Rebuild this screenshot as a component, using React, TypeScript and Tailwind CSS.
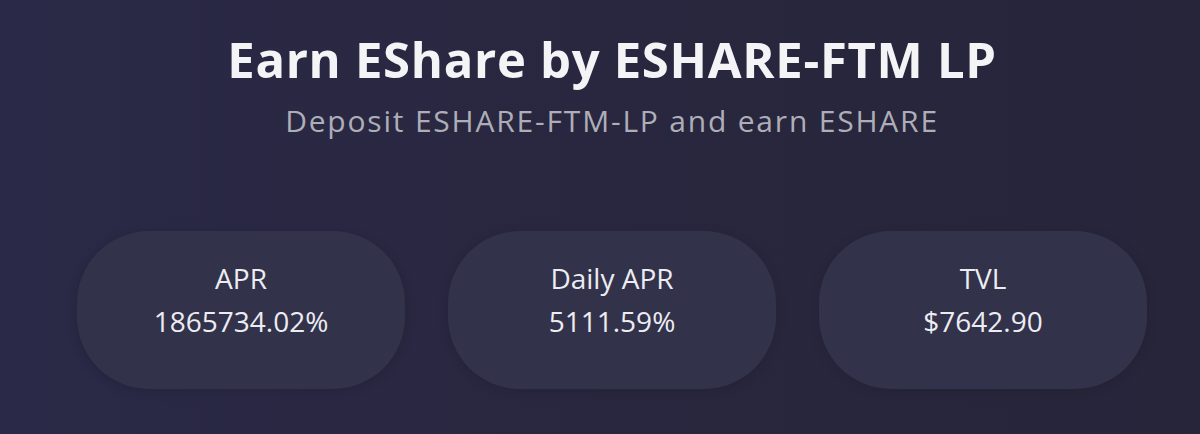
const stats = [
  { label: 'APR', value: '1865734.02%' },
  { label: 'Daily APR', value: '5111.59%' },
  { label: 'TVL', value: '$7642.90' },
];

const StatCard = ({ label, value }: { label: string; value: string }) => (
  <div className="flex h-[158px] w-[328px] flex-col items-center rounded-[72px] bg-[#32324a] pt-[30px] shadow-[0_2px_12px_rgba(0,0,0,0.12)]">
    <p className="text-[28px] leading-[34px] text-[#ececf2]">{label}</p>
    <p className="mt-[9px] text-[28px] leading-[34px] text-[#ececf2]">{value}</p>
  </div>
);

export default function App() {
  return (
    <div
      className="flex h-[434px] w-[1200px] flex-col items-center bg-gradient-to-r from-[#2a2947] via-[#29273f] to-[#27253a] pl-[24px] pt-[29px]"
      style={{ fontFamily: '"Open Sans", "Liberation Sans", sans-serif' }}
    >
      <h1 className="text-[49px] font-bold leading-[60px] tracking-[0.7px] text-[#f4f4f6]">
        Earn EShare by ESHARE-FTM LP
      </h1>
      <p className="mt-[12px] text-[30px] leading-[40px] tracking-[1.8px] text-[#aeaeb8]">
        Deposit ESHARE-FTM-LP and earn ESHARE
      </p>
      <div className="mt-[90px] flex gap-[43px]">
        {stats.map((s) => (
          <StatCard key={s.label} label={s.label} value={s.value} />
        ))}
      </div>
    </div>
  );
}
